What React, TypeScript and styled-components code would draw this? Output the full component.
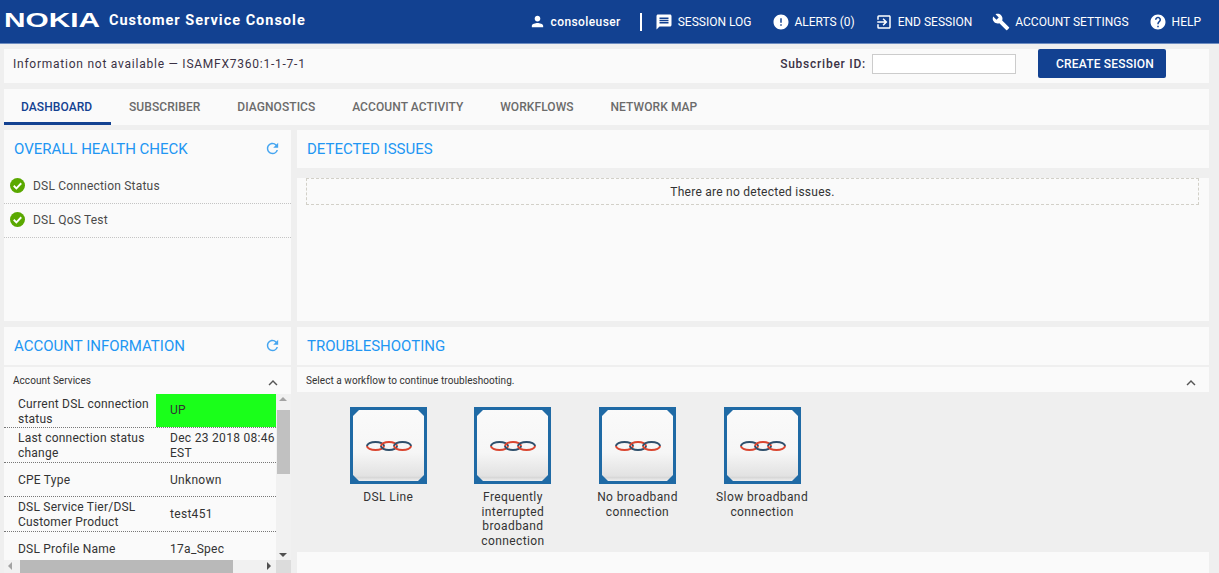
import styled, { createGlobalStyle } from 'styled-components'
import {
    MdPerson, MdMessage, MdError, MdExitToApp, MdBuild, MdHelp, MdRefresh, MdKeyboardArrowUp,
} from 'react-icons/md'

const GlobalStyle = createGlobalStyle`
    html, body {
        margin: 0;
        padding: 0;
        height: 573px;
        overflow: hidden;
        background: #efefef;
        font-family: Roboto, "Noto Sans", sans-serif;
        color: #333;
    }
    * { box-sizing: border-box; }
`

const TopBar = styled.header`
    display: flex;
    align-items: center;
    height: 44px;
    padding: 0 18px 3px 4px;
    background: #124191;
    border-bottom: 1px solid #6d8cc0;
    color: #fff;
`

const Logo = styled.svg`
    display: block;
    width: 96px;
    height: 20px;
    margin-right: 9px;
    fill: #fff;
    overflow: visible;
`

const AppTitle = styled.div`
    font-size: 14.5px;
    font-weight: 700;
    letter-spacing: 1px;
`

const TopNav = styled.nav`
    display: flex;
    align-items: center;
    margin: 3px 0 0 auto;
`

const NavItem = styled.div<{ $gap?: number }>`
    display: flex;
    align-items: center;
    gap: 5px;
    margin-left: ${p => p.$gap ?? 20}px;
    font-size: 12px;
    white-space: nowrap;
    svg { font-size: 18px; flex: none; }
`

const UserName = styled(NavItem)`
    font-weight: 500;
    letter-spacing: 0.4px;
    svg { font-size: 17px; }
`

const NavDivider = styled.span`
    width: 2px;
    height: 18px;
    margin-left: 19px;
    background: #fff;
`

const Main = styled.main`
    padding: 0 10px 0 4px;
`

const InfoBar = styled.section`
    display: flex;
    align-items: center;
    height: 34px;
    margin-top: 5px;
    padding: 0 43px 5px 9px;
    background: #fafafa;
    font-size: 12px;
    letter-spacing: 0.76px;
    color: #3a3245;
`

const SubscriberLabel = styled.label`
    margin-left: auto;
    font-weight: 500;
`

const SubscriberInput = styled.input`
    width: 144px;
    height: 20px;
    margin-left: 6px;
    border: 1px solid #ccc;
    background: #fff;
    outline: none;
`

const CreateButton = styled.button`
    width: 128px;
    height: 29px;
    margin-left: 22px;
    padding: 0 0 0 6px;
    border: none;
    border-radius: 2px;
    background: #124191;
    color: #fff;
    font-family: inherit;
    font-size: 12px;
    font-weight: 500;
    letter-spacing: 0.2px;
`

const TabBar = styled.div`
    display: flex;
    height: 36px;
    margin-top: 6px;
    background: #fafafa;
`

const Tab = styled.div<{ $active?: boolean }>`
    display: flex;
    align-items: center;
    padding: 3px 18.4px 0 ${p => (p.$active ? 17 : 18.4)}px;
    border-bottom: 3px solid ${p => (p.$active ? '#124191' : 'transparent')};
    color: ${p => (p.$active ? '#124191' : '#6b6b6b')};
    font-size: 12px;
    font-weight: 500;
    letter-spacing: 0.08px;
    white-space: nowrap;
`

const Row = styled.div<{ $height: number; $top: number }>`
    display: grid;
    grid-template-columns: 287px 1fr;
    gap: 6px;
    height: ${p => p.$height}px;
    margin-top: ${p => p.$top}px;
`

const Column = styled.div`
    display: flex;
    flex-direction: column;
    min-height: 0;
    overflow: hidden;
`

const PanelHead = styled.div`
    display: flex;
    align-items: center;
    justify-content: space-between;
    flex: none;
    height: 38px;
    padding: 0 10px 1px 10px;
    background: #fafafa;
    svg { font-size: 17px; color: #45a5f0; }
`

const PanelTitle = styled.h2`
    margin: 0;
    color: #2196f3;
    font-size: 15px;
    font-weight: 400;
    white-space: nowrap;
`

const HealthBody = styled.div`
    flex: 1;
    padding-top: 2px;
    background: #fafafa;
`

const HealthRow = styled.div`
    display: flex;
    align-items: center;
    gap: 8px;
    height: 34px;
    padding: 0 0 2px 6px;
    border-bottom: 1px dotted #c4c4c4;
    color: #4a4a4a;
    font-size: 12px;
    letter-spacing: 0.2px;
    svg { flex: none; width: 15px; height: 15px; }
`

const IssuesBody = styled.div`
    flex: 1;
    margin-top: 10px;
    padding: 0 10px 0 9px;
    background: #fafafa;
`

const IssuesNote = styled.div`
    display: flex;
    align-items: center;
    justify-content: center;
    height: 27px;
    border: 1px dashed #d2d0c8;
    color: #333;
    font-size: 12px;
    letter-spacing: 0.25px;
`

const SubHead = styled.div`
    display: flex;
    align-items: center;
    justify-content: space-between;
    flex: none;
    height: 25px;
    margin-top: 2px;
    padding: 2px 9px 0;
    background: #fafafa;
    color: #333;
    font-size: 10px;
    letter-spacing: 0.05px;
    svg { font-size: 18px; color: #555; margin-top: 5px; }
`

const TableWrap = styled.div`
    display: grid;
    grid-template-columns: 272px 15px;
    grid-template-rows: 166px 13px;
    padding-top: 2px;
    background: #fafafa;
`

const TableView = styled.div`
    overflow: hidden;
`

const TableRow = styled.div`
    display: grid;
    grid-template-columns: 152px 120px;
    height: 34.4px;
    border-bottom: 1px dotted #777;
    font-size: 12px;
    line-height: 14.7px;
    letter-spacing: 0.22px;
    color: #333;
`

const CellLabel = styled.div`
    align-self: center;
    padding: 2px 0 0 14px;
`

const CellValue = styled.div<{ $up?: boolean }>`
    align-self: stretch;
    padding: ${p => (p.$up ? 9 : 3)}px 0 0 14px;
    overflow: hidden;
    white-space: nowrap;
    letter-spacing: 0.3px;
    background: ${p => (p.$up ? '#1aff1a' : 'transparent')};
`

const CellSingle = styled(CellValue)`
    padding-top: 10px;
`

const VTrack = styled.div`
    position: relative;
    background: #f1f1f1;
`

const VThumb = styled.div`
    width: 13px;
    height: 64px;
    margin: 16px 0 0 1px;
    background: #c1c1c1;
`

const HTrack = styled.div`
    position: relative;
    background: #f1f1f1;
`

const HThumb = styled.div`
    width: 213px;
    height: 13px;
    margin-left: 16px;
    background: #b9b9b9;
`

const Corner = styled.div`
    background: #dcdcdc;
`

const Arrow = styled.span<{ $dir: 'up' | 'down' | 'left' | 'right'; $dim?: boolean }>`
    position: absolute;
    width: 0;
    height: 0;
    border: 4px solid transparent;
    ${p => p.$dir === 'up' && `top: 3px; left: 3px; border-top: 0; border-bottom-color: ${p.$dim ? '#a3a3a3' : '#505050'};`}
    ${p => p.$dir === 'down' && `bottom: 3px; left: 3px; border-bottom: 0; border-top-color: #505050;`}
    ${p => p.$dir === 'left' && `left: 4px; top: 2px; border-left: 0; border-right-color: ${p.$dim ? '#a3a3a3' : '#505050'};`}
    ${p => p.$dir === 'right' && `right: 5px; top: 2px; border-right: 0; border-left-color: #505050;`}
`

const FlowArea = styled.div`
    display: flex;
    flex: none;
    height: 160px;
    padding: 15px 0 0 29px;
`

const FlowItem = styled.div`
    display: flex;
    flex-direction: column;
    align-items: center;
    flex: none;
    width: 124.6px;
    svg { display: block; width: 77px; height: 77px; flex: none; }
`

const FlowLabel = styled.div`
    width: 100px;
    margin-top: 6px;
    color: #333;
    font-size: 12px;
    line-height: 14.7px;
    letter-spacing: 0.4px;
    text-align: center;
`

const FlowFooter = styled.div`
    flex: 1;
    background: #fafafa;
`

const CheckIcon = () => (
    <svg viewBox="0 0 16 16">
        <circle cx="8" cy="8" r="8" fill="#5aa800" />
        <path d="M4 8.3l2.8 2.7L12 5.6" fill="none" stroke="#fff" strokeWidth="2" />
    </svg>
)

const DslTile = ({ id }: { id: number }) => (
    <svg viewBox="0 0 77 77">
        <defs>
            <linearGradient id={`tile${id}`} x1="0" y1="0" x2="0" y2="1">
                <stop offset="0" stopColor="#fafafa" />
                <stop offset="0.6" stopColor="#f6f6f6" />
                <stop offset="0.93" stopColor="#e2e2e2" />
                <stop offset="0.95" stopColor="#d8d8d8" />
                <stop offset="1" stopColor="#efefef" />
            </linearGradient>
        </defs>
        <rect width="77" height="77" fill="#1f6aa5" />
        <path d="M9 3h59l6 6v59l-6 6H9l-6-6V9z" fill={`url(#tile${id})`} />
        <g fill="none" strokeWidth="2">
            <path d="M17 39a8.500 4 0 0 1 17 0" stroke="#2f4f6b" />
            <path d="M17 39a8.500 4 0 0 0 17 0" stroke="#d9452f" />
            <path d="M31 39a8 4 0 0 1 16 0" stroke="#d9452f" />
            <path d="M31 39a8 4 0 0 0 16 0" stroke="#2f4f6b" />
            <path d="M44 39a8.500 4 0 0 1 17 0" stroke="#2f4f6b" />
            <path d="M44 39a8.500 4 0 0 0 17 0" stroke="#d9452f" />
        </g>
    </svg>
)

const tabs = ['DASHBOARD', 'SUBSCRIBER', 'DIAGNOSTICS', 'ACCOUNT ACTIVITY', 'WORKFLOWS', 'NETWORK MAP']

const workflows = [
    'DSL Line',
    'Frequently interrupted broadband connection',
    'No broadband connection',
    'Slow broadband connection',
]

export default function App() {
    return (
        <>
            <GlobalStyle />
            <TopBar>
                <Logo viewBox="0 0 96 20">
                    <text x="0" y="17" fontFamily="Liberation Sans" fontWeight="700" fontSize="21" textLength="96" lengthAdjust="spacingAndGlyphs">NOKIA</text>
                </Logo>
                <AppTitle>Customer Service Console</AppTitle>
                <TopNav>
                    <UserName><MdPerson />consoleuser</UserName>
                    <NavDivider />
                    <NavItem $gap={13}><MdMessage />SESSION LOG</NavItem>
                    <NavItem><MdError />ALERTS (0)</NavItem>
                    <NavItem><MdExitToApp />END SESSION</NavItem>
                    <NavItem><MdBuild />ACCOUNT SETTINGS</NavItem>
                    <NavItem><MdHelp />HELP</NavItem>
                </TopNav>
            </TopBar>
            <Main>
                <InfoBar>
                    Information not available — ISAMFX7360:1-1-7-1
                    <SubscriberLabel>Subscriber ID:</SubscriberLabel>
                    <SubscriberInput />
                    <CreateButton>CREATE SESSION</CreateButton>
                </InfoBar>
                <TabBar>
                    {tabs.map((t, i) => <Tab key={t} $active={i === 0}>{t}</Tab>)}
                </TabBar>
                <Row $height={191} $top={5}>
                    <Column>
                        <PanelHead>
                            <PanelTitle>OVERALL HEALTH CHECK</PanelTitle>
                            <MdRefresh />
                        </PanelHead>
                        <HealthBody>
                            <HealthRow><CheckIcon />DSL Connection Status</HealthRow>
                            <HealthRow><CheckIcon />DSL QoS Test</HealthRow>
                        </HealthBody>
                    </Column>
                    <Column>
                        <PanelHead>
                            <PanelTitle>DETECTED ISSUES</PanelTitle>
                        </PanelHead>
                        <IssuesBody>
                            <IssuesNote>There are no detected issues.</IssuesNote>
                        </IssuesBody>
                    </Column>
                </Row>
                <Row $height={246} $top={6}>
                    <Column>
                        <PanelHead>
                            <PanelTitle>ACCOUNT INFORMATION</PanelTitle>
                            <MdRefresh />
                        </PanelHead>
                        <SubHead>Account Services<MdKeyboardArrowUp /></SubHead>
                        <TableWrap>
                            <TableView>
                                <TableRow>
                                    <CellLabel>Current DSL connection status</CellLabel>
                                    <CellValue $up>UP</CellValue>
                                </TableRow>
                                <TableRow>
                                    <CellLabel>Last connection status change</CellLabel>
                                    <CellValue>Dec 23 2018 08:46<br />EST</CellValue>
                                </TableRow>
                                <TableRow>
                                    <CellLabel>CPE Type</CellLabel>
                                    <CellSingle>Unknown</CellSingle>
                                </TableRow>
                                <TableRow>
                                    <CellLabel>DSL Service Tier/DSL Customer Product</CellLabel>
                                    <CellSingle>test451</CellSingle>
                                </TableRow>
                                <TableRow>
                                    <CellLabel>DSL Profile Name</CellLabel>
                                    <CellSingle>17a_Spec</CellSingle>
                                </TableRow>
                            </TableView>
                            <VTrack>
                                <Arrow $dir="up" $dim />
                                <VThumb />
                                <Arrow $dir="down" />
                            </VTrack>
                            <HTrack>
                                <Arrow $dir="left" $dim />
                                <HThumb />
                                <Arrow $dir="right" />
                            </HTrack>
                            <Corner />
                        </TableWrap>
                    </Column>
                    <Column>
                        <PanelHead>
                            <PanelTitle>TROUBLESHOOTING</PanelTitle>
                        </PanelHead>
                        <SubHead>Select a workflow to continue troubleshooting.<MdKeyboardArrowUp /></SubHead>
                        <FlowArea>
                            {workflows.map((w, i) => (
                                <FlowItem key={w}>
                                    <DslTile id={i} />
                                    <FlowLabel>{w}</FlowLabel>
                                </FlowItem>
                            ))}
                        </FlowArea>
                        <FlowFooter />
                    </Column>
                </Row>
            </Main>
        </>
    )
}
